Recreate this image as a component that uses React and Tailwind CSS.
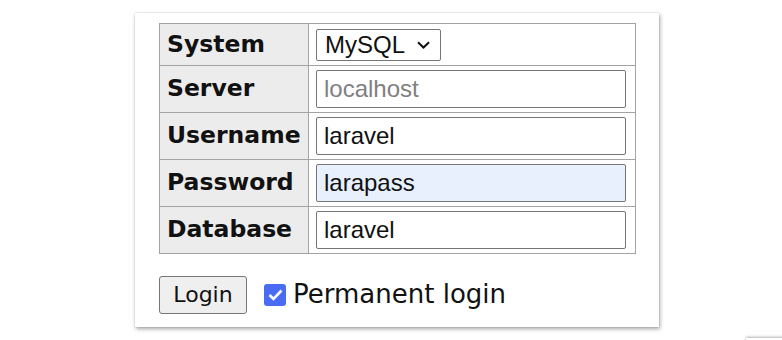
import React from 'react';

const rows = [
  { label: 'Server', value: '', placeholder: 'localhost' },
  { label: 'Username', value: 'laravel' },
  { label: 'Password', value: 'larapass', autofill: true },
  { label: 'Database', value: 'laravel' },
];

const thCls =
  "border border-[#a3a3a3] bg-[#ececec] px-[7px] text-left align-middle text-[23.5px] font-bold text-[#111] font-['DejaVu_Sans',sans-serif]";
const tdCls = 'border border-[#a3a3a3] px-[7px] align-middle';

const App = () => {
  return (
    <div className="relative h-[340px] w-[782px] overflow-hidden bg-white">
      <div className="ml-[135px] mt-[13px] w-[524px] bg-white pb-[13px] pl-[24px] pt-[10px] shadow-[1px_2px_4px_rgba(0,0,0,0.35),0_0_1px_rgba(0,0,0,0.25)]">
        <table className="w-[477px] border-collapse">
          <tbody>
            <tr className="h-[42px]">
              <th className={`${thCls} w-[149px]`}>System</th>
              <td className={tdCls}>
                <div className="flex h-[32px] w-[125px] items-center justify-between rounded-[2px] border border-[#767676] bg-white pl-[8px] pr-[10px] text-[24px] text-[#111] font-['Liberation_Sans',Arial,sans-serif]">
                  <span>MySQL</span>
                  <svg width="13" height="8" viewBox="0 0 13 8" fill="none">
                    <path d="M1 1.2 L6.5 6.5 L12 1.2" stroke="#111" strokeWidth="2" />
                  </svg>
                </div>
              </td>
            </tr>
            {rows.map((row) => (
              <tr key={row.label} className="h-[47px]">
                <th className={thCls}>{row.label}</th>
                <td className={tdCls}>
                  <input
                    readOnly
                    value={row.value}
                    placeholder={row.placeholder}
                    className={`block h-[38px] w-[310px] rounded-[2px] border border-[#767676] px-[7px] text-[24px] text-[#111] outline-none placeholder:text-[#808080] font-['Liberation_Sans',Arial,sans-serif] ${
                      row.autofill ? 'bg-[#e8f0fe]' : 'bg-white'
                    }`}
                  />
                </td>
              </tr>
            ))}
          </tbody>
        </table>
        <div className="mt-[21px] flex items-center">
          <button className="h-[38px] w-[88px] rounded-[3px] border border-[#767676] bg-[#efefef] text-[22px] text-[#111] font-['DejaVu_Sans',sans-serif]">
            Login
          </button>
          <label className="ml-[17px] flex items-center gap-[7px] text-[26px] text-[#111] font-['DejaVu_Sans',sans-serif]">
            <span className="flex h-[22px] w-[22px] items-center justify-center rounded-[3px] bg-[#4a6cf3]">
              <svg width="15" height="12" viewBox="0 0 15 12" fill="none">
                <path d="M1.5 6 L5.5 10 L13.5 1.5" stroke="white" strokeWidth="2.6" />
              </svg>
            </span>
            Permanent login
          </label>
        </div>
      </div>
      <div className="absolute left-[746px] top-[338px] h-[10px] w-[40px] bg-white shadow-[0_-1px_3px_rgba(0,0,0,0.3)]" />
    </div>
  );
};

export default App;
